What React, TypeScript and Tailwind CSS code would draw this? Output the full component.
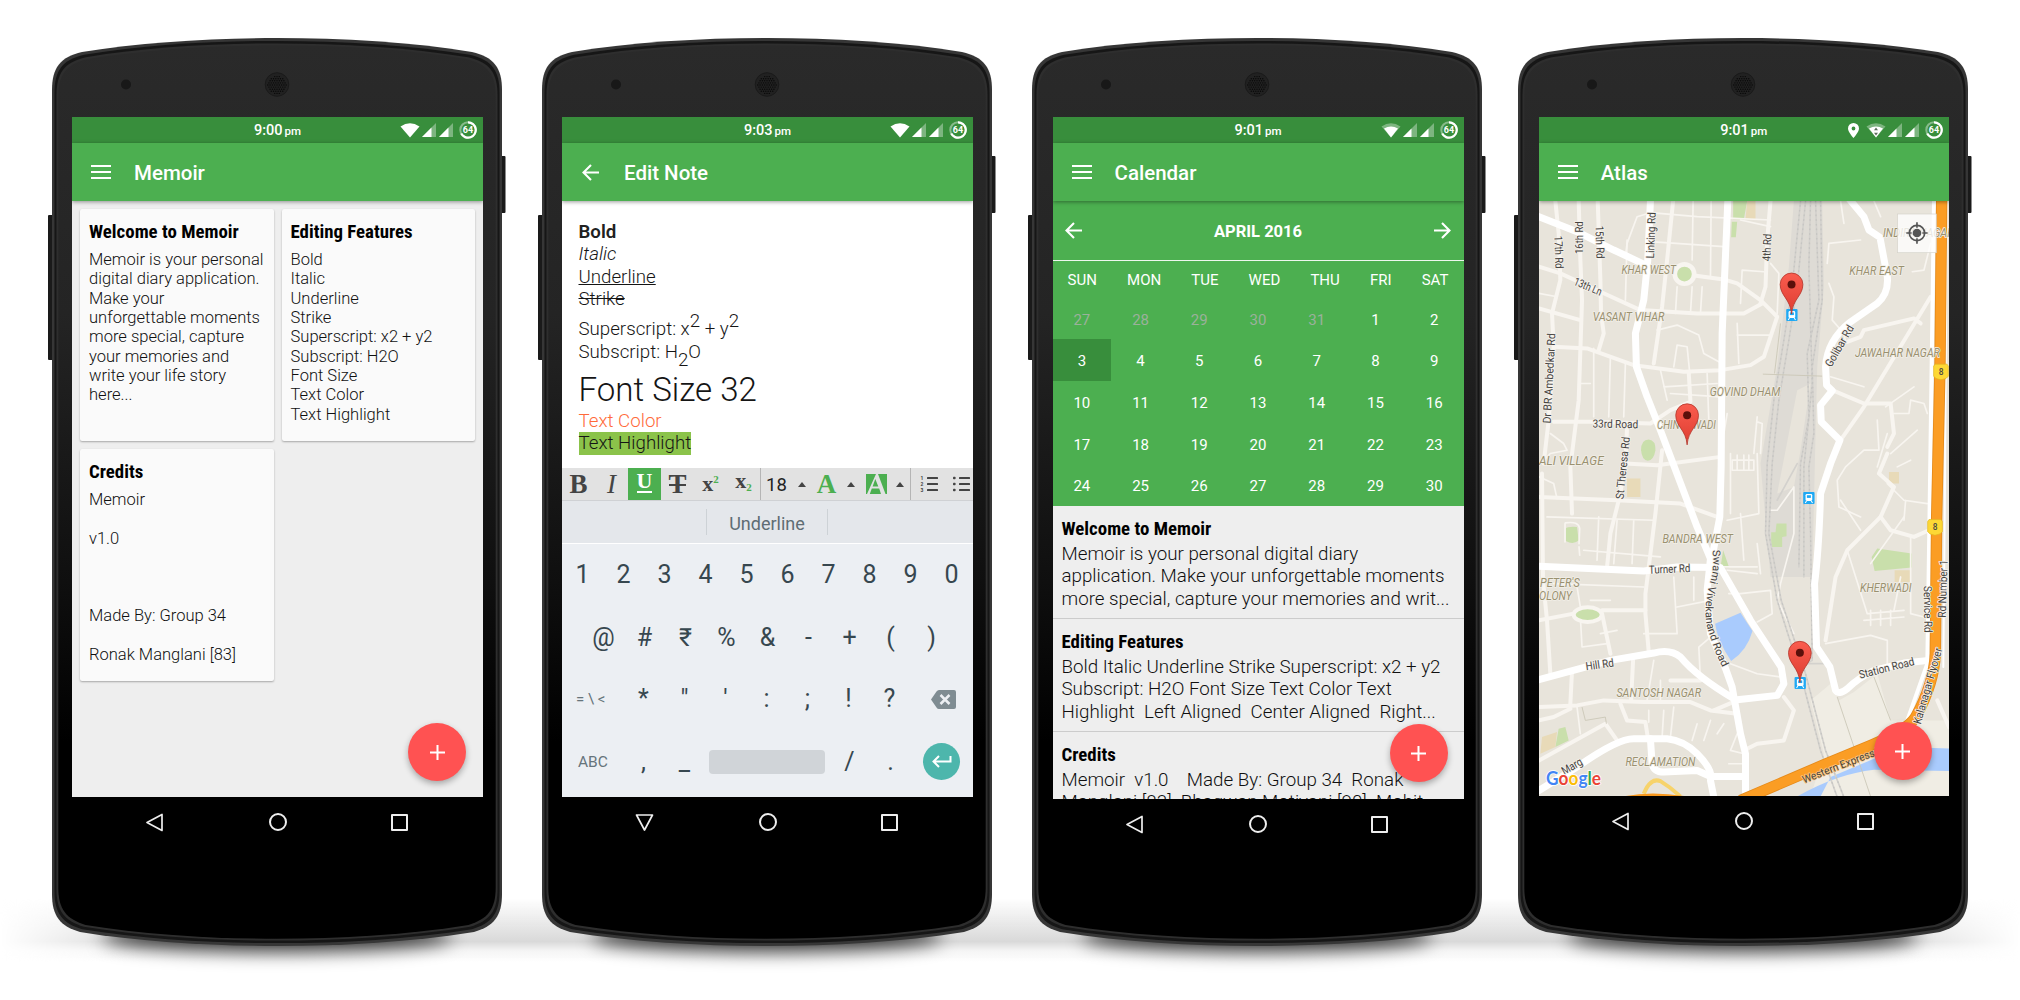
import React from "react";

const FRAME =
  "M0 52 C0 30 8 19 30 14 C90 4 160 0 225 0 C290 0 360 4 420 14 C442 19 450 30 450 52 V856 C450 878 442 888 422 894 C360 904 290 908 225 908 C160 908 90 904 28 894 C8 888 0 878 0 856 Z";

function PhoneBody({ id }: { id: string }) {
  const holes: React.ReactNode[] = [];
  for (let r = -4; r <= 4; r++) {
    for (let c = -4; c <= 4; c++) {
      const x = c * 2.3 + (r % 2 ? 1.15 : 0);
      const y = r * 2.1;
      if (x * x + y * y < 90) holes.push(<circle key={`${r}.${c}`} cx={225 + x} cy={47 + y} r="0.7" fill="#080808" />);
    }
  }
  return (
    <svg className="absolute -left-1 top-0" width="458" height="908" viewBox="-4 0 458 908">
      <defs>
        <linearGradient id={`${id}-face`} x1="0" y1="0" x2="0" y2="1">
          <stop offset="0" stopColor="#2a2a2a" />
          <stop offset="0.3" stopColor="#242424" />
          <stop offset="0.6" stopColor="#0f0f0f" />
          <stop offset="0.78" stopColor="#000" />
          <stop offset="1" stopColor="#000" />
        </linearGradient>
      </defs>
      <rect x="-4" y="177" width="6" height="145" rx="1" fill="#1a1a1a" />
      <rect x="448" y="118" width="5.5" height="57" rx="1" fill="#1a1a1a" />
      <path d={FRAME} fill="#363636" />
      <path d={FRAME} fill="#161616" transform="translate(225 454) scale(0.989 0.9935) translate(-225 -454)" />
      <path d={FRAME} fill="#2e2e2e" transform="translate(225 454) scale(0.98 0.988) translate(-225 -454)" />
      <path d={FRAME} fill={`url(#${id}-face)`} transform="translate(225 454) scale(0.972 0.984) translate(-225 -454)" />
      <circle cx="74" cy="46.500" r="5" fill="#181818" />
      <circle cx="225" cy="46.500" r="11.800" fill="#212121" stroke="#1a1a1a" strokeWidth="1" />
      {holes}
    </svg>
  );
}

function Wifi({ level }: { level: "full" | "low" | "data" }) {
  return (
    <svg width="20" height="15" viewBox="0 0 20 15">
      <path d="M0.500 3.500 Q10 -3 19.500 3.500 L10 14.500 Z" fill="#fff" opacity={level === "full" ? 1 : 0.35} />
      {level !== "full" && <path d="M3 5.500 Q10 1.500 17 5.500 L10 14.500 Z" fill="#fff" />}
      {level === "data" && <path d="M10 4.500 L12 7.300 H8 Z M10 12.500 L12 9.700 H8 Z" fill="#5a6b5a" />}
    </svg>
  );
}

function Signal({ low }: { low?: boolean }) {
  return (
    <svg width="14" height="14" viewBox="0 0 14 14">
      <path d="M14 0 V14 H0 Z" fill="#fff" opacity="0.35" />
      {low ? <path d="M8.500 5.500 V14 H0 Z" fill="#fff" /> : <path d="M9.500 4.500 V14 H0 Z" fill="#fff" />}
    </svg>
  );
}

function Battery() {
  return (
    <svg width="18" height="18" viewBox="0 0 18 18">
      <circle cx="9" cy="9" r="7.700" fill="none" stroke="#fff" strokeOpacity="0.4" strokeWidth="2" />
      <path d="M9 1.300 A7.700 7.700 0 1 1 2.200 12.500" fill="none" stroke="#fff" strokeWidth="2.200" />
      <text x="9" y="12.200" textAnchor="middle" fontSize="9" fontWeight="700" fontFamily="Roboto, sans-serif" fill="#fff">
        64
      </text>
    </svg>
  );
}

function StatusBar({ time, wifi, pin, signals }: { time: string; wifi: "full" | "low" | "data"; pin?: boolean; signals: [boolean, boolean] }) {
  return (
    <div className="relative flex h-[26px] shrink-0 items-center justify-center bg-[#388e3c] text-white">
      <div className="flex items-baseline gap-[2px] pt-[3px] leading-none">
        <span className="text-[14.500px] font-medium">{time}</span>
        <span className="text-[11.500px] font-medium">pm</span>
      </div>
      <div className="absolute right-[6px] top-[4px] flex items-center">
        {pin && (
          <svg className="mr-[7px]" width="11" height="15" viewBox="0 0 11 15">
            <path d="M5.500 0 A5.500 5.500 0 0 1 11 5.500 C11 9 5.500 15 5.500 15 C5.500 15 0 9 0 5.500 A5.500 5.500 0 0 1 5.500 0 Z M5.500 3.600 A1.900 1.900 0 1 0 5.500 7.400 A1.900 1.900 0 1 0 5.500 3.600" fill="#fff" />
          </svg>
        )}
        <Wifi level={wifi} />
        <span className="ml-[2px]"><Signal low={signals[0]} /></span>
        <span className="ml-[3px]"><Signal low={signals[1]} /></span>
        <span className="ml-[6px]"><Battery /></span>
      </div>
    </div>
  );
}

function Arrow({ flip }: { flip?: boolean }) {
  return (
    <svg width="17" height="17" viewBox="0 0 17 17" className={flip ? "rotate-180" : ""}>
      <path d="M9 1 L1.500 8.500 L9 16 M1.500 8.500 H17" fill="none" stroke="#fff" strokeWidth="2.100" />
    </svg>
  );
}

function AppBar({ title, back }: { title: string; back?: boolean }) {
  return (
    <div className="relative z-10 flex h-[58px] shrink-0 items-center bg-[#4caf50] shadow-[0_1px_4px_rgba(0,0,0,0.4)]">
      <div className="flex w-[62px] pl-[19px]">
        {back ? (
          <span className="pl-px"><Arrow /></span>
        ) : (
          <div className="flex w-5 flex-col gap-[4px]">
            <div className="h-[2px] bg-white" />
            <div className="h-[2px] bg-white" />
            <div className="h-[2px] bg-white" />
          </div>
        )}
      </div>
      <div className="pt-[2px] text-[20.500px] font-medium leading-6 text-white">{title}</div>
    </div>
  );
}

function NavBar({ down }: { down?: boolean }) {
  return (
    <div className="flex h-[50px] w-[411px] items-center justify-between pl-[73px] pr-[75px]">
      <svg width="19" height="19" viewBox="0 0 19 19" className={down ? "-rotate-90" : ""}>
        <path d="M17 1.500 V17.500 L2 9.500 Z" fill="none" stroke="#eee" strokeWidth="1.700" strokeLinejoin="round" />
      </svg>
      <div className="size-[18px] rounded-full border-2 border-[#eee]" />
      <div className="size-[17px] rounded-[1px] border-2 border-[#eee]" />
    </div>
  );
}

function Fab({ className }: { className: string }) {
  return (
    <div className={"absolute z-20 flex size-[58px] items-center justify-center rounded-full bg-[#ff5252] shadow-[0_3px_6px_rgba(0,0,0,0.3)] " + className}>
      <svg width="15" height="15" viewBox="0 0 15 15">
        <path d="M7.500 0 V15 M0 7.500 H15" stroke="#fff" strokeWidth="2" />
      </svg>
    </div>
  );
}

type PhoneProps = {
  id: string;
  className?: string;
  screen: string;
  down?: boolean;
  children: React.ReactNode;
};

function Phone({ id, className = "", screen, down, children }: PhoneProps) {
  return (
    <div className={"relative h-[908px] w-[450px] shrink-0 " + className}>
      <PhoneBody id={id} />
      <div className="relative flex flex-col pt-[79px]">
        <div className={"relative flex flex-col overflow-hidden " + screen}>{children}</div>
        <div className="ml-5">
          <NavBar down={down} />
        </div>
      </div>
    </div>
  );
}

function NoteTitle({ children }: { children: React.ReactNode }) {
  return <div className="text-[18.850px] font-bold leading-[22px] text-black [font-stretch:75%]">{children}</div>;
}

function NoteCard({ title, lines }: { title: string; lines: string[] }) {
  return (
    <div className="h-[232px] rounded-[2px] bg-[#fafafa] px-[9px] pt-[12px] shadow-[0_1px_2px_rgba(0,0,0,0.3)]">
      <NoteTitle>{title}</NoteTitle>
      <div className="mt-[7px] text-[16.550px] font-light leading-[19.330px] text-[#101010]">
        {lines.map((l, i) => (
          <div key={i} className="h-[19.330px] whitespace-nowrap">{l}</div>
        ))}
      </div>
    </div>
  );
}

function Notes() {
  return (
    <Phone id="notes" screen="ml-5 h-[680px] w-[411px] bg-[#eeeeee]">
      <StatusBar time="9:00" wifi="full" signals={[false, false]} />
      <AppBar title="Memoir" />
      <div className="grid grid-cols-2 gap-2 p-2">
        <NoteCard
          title="Welcome to Memoir"
          lines={["Memoir is your personal", "digital diary application.", "Make your", "unforgettable moments", "more special, capture", "your memories and", "write your life story", "here..."]}
        />
        <NoteCard
          title="Editing Features"
          lines={["Bold", "Italic", "Underline", "Strike", "Superscript: x2 + y2", "Subscript: H2O", "Font Size", "Text Color", "Text Highlight"]}
        />
        <NoteCard title="Credits" lines={["Memoir", "", "v1.0", "", "", "", "Made By: Group 34", "", "Ronak Manglani [83]"]} />
      </div>
      <Fab className="left-[336px] top-[606px]" />
    </Phone>
  );
}

function Caret() {
  return (
    <div className="flex w-4 justify-center">
      <div className="h-0 w-0 border-x-[4px] border-b-[5px] border-x-transparent border-b-[#444]" />
    </div>
  );
}

function ListIcon({ numbered }: { numbered?: boolean }) {
  return (
    <svg width="18" height="18" viewBox="0 0 18 18" className="shrink-0">
      {[3, 9, 15].map((y, i) => (
        <g key={y}>
          {numbered ? (
            <text x="0.500" y={y + 2} fontSize="5" fontWeight="700" fontFamily="Roboto, sans-serif" fill="#444">{i + 1}</text>
          ) : (
            <rect x="1" y={y - 1.300} width="2.600" height="2.600" rx="0.800" fill="#444" />
          )}
          <rect x="7" y={y - 1} width="11" height="2" rx="0.500" fill="#444" />
        </g>
      ))}
    </svg>
  );
}

function FormatBar() {
  const cell = "flex h-full w-[33px] shrink-0 items-center justify-center";
  return (
    <div className="flex h-[33px] shrink-0 items-center overflow-hidden border-b border-[#cfd1d4] bg-[#e2e2e2] font-['Liberation_Serif',serif] text-[27px] leading-none text-[#444]">
      <div className={cell + " font-bold"}>B</div>
      <div className={cell + " italic"}>I</div>
      <div className={cell + " bg-[#4caf50] pb-1 text-[22px] font-bold text-white"}>
        <span className="border-b-2 border-white leading-[20px]">U</span>
      </div>
      <div className={cell + " relative font-bold"}>
        T
        <div className="absolute left-[8px] top-[16px] h-[2px] w-[17px] bg-[#444]" />
      </div>
      <div className={cell + " pb-px text-[22px] font-bold"}>
        x<span className="-mt-[9px] text-[11px] text-[#4caf50]">2</span>
      </div>
      <div className={cell + " pb-[6px] text-[22px] font-bold"}>
        x<span className="mt-[12px] text-[11px] text-[#4caf50]">2</span>
      </div>
      <div className="flex h-full w-[34px] items-center justify-center border-l border-[#b5b5b5] pr-[2px] pt-[2px] font-['Roboto',sans-serif] text-[18.500px] text-[#222]">
        18
      </div>
      <Caret />
      <div className={cell + " font-bold text-[#4caf50]"}>A</div>
      <Caret />
      <div className={cell + " pl-px"}>
        <svg width="21" height="20" viewBox="0 0 21 20">
          <rect width="21" height="20" fill="#4caf50" />
          <path d="M1 20 L10 0 H12 L19.500 20 H15 L13.200 14.500 H5.800 L3.800 20 Z M6.600 12.500 H12.300 L9.300 5 Z" fill="#e2e2e2" fillRule="evenodd" />
        </svg>
      </div>
      <Caret />
      <div className="ml-[2px] flex h-full shrink-0 items-center gap-[14px] border-l border-[#b5b5b5] pl-[9px]">
        <ListIcon numbered />
        <ListIcon />
      </div>
    </div>
  );
}

function Key({ children }: { children: React.ReactNode }) {
  return <div className="flex w-[41px] shrink-0 justify-center">{children}</div>;
}

function Keyboard() {
  return (
    <div className="flex flex-1 flex-col bg-[#eceff3] text-[25px] leading-[30px] text-[#37474f]">
      <div className="flex h-[61px] items-center pt-px">
        {"1234567890".split("").map((k) => <Key key={k}>{k}</Key>)}
      </div>
      <div className="flex h-[63px] items-center pl-[21px] pt-[2px]">
        {["@", "#", "₹", "%", "&", "-", "+", "(", ")"].map((k) => <Key key={k}>{k}</Key>)}
      </div>
      <div className="flex h-[62px] items-center">
        <div className="w-[61px] pl-[14px] text-[15px] text-[#66747b]">= \ &lt;</div>
        {["*", '"', "'", ":", ";", "!", "?"].map((k) => <Key key={k}>{k}</Key>)}
        <svg className="ml-[21px]" width="25" height="19" viewBox="0 0 25 19">
          <path d="M8 0 H23 Q25 0 25 2 V17 Q25 19 23 19 H8 Q6.500 19 5.500 17.500 L0 9.500 L5.500 1.500 Q6.500 0 8 0 Z" fill="#7f8c92" />
          <path d="M9.500 5 L18.500 14 M18.500 5 L9.500 14" stroke="#eceff3" strokeWidth="2.500" />
        </svg>
      </div>
      <div className="flex h-[63px] items-center">
        <div className="w-[61px] pl-[16px] text-[15.500px] text-[#66747b]">ABC</div>
        <Key>,</Key>
        <Key>_</Key>
        <div className="ml-[4px] h-6 w-[116px] rounded-[4px] bg-[#d0d4d8]" />
        <div className="ml-[4px] flex"><Key>/</Key></div>
        <Key>.</Key>
        <div className="ml-[12px] flex size-[37px] items-center justify-center rounded-full bg-[#4db6ac]">
          <svg width="20" height="13" viewBox="0 0 20 13">
            <path d="M7 1 L1.500 6.500 L7 12 M1.500 6.500 H18.500 V1" fill="none" stroke="#fff" strokeWidth="2" />
          </svg>
        </div>
      </div>
    </div>
  );
}

function Editor() {
  const line = "h-[22.330px] leading-[22.330px]";
  return (
    <Phone id="editor" className="ml-10" screen="ml-5 h-[680px] w-[411px] bg-white" down>
      <StatusBar time="9:03" wifi="full" signals={[false, false]} />
      <AppBar title="Edit Note" back />
      <div className="h-[267px] shrink-0 pl-[16.500px] pt-[20px] text-[18.700px] font-light text-[#151515]">
        <div className={line + " font-semibold text-[#212121]"}>Bold</div>
        <div className={line + " italic"}>Italic</div>
        <div className={line}><span className="underline">Underline</span></div>
        <div className={line}><span className="line-through">Strike</span></div>
        <div className={line + " mt-[8px]"}>
          Superscript: x<span className="relative -top-[8px]">2</span> + y<span className="relative -top-[8px]">2</span>
        </div>
        <div className={line}>
          Subscript: H<span className="relative top-[8px]">2</span>O
        </div>
        <div className="mt-[7px] h-[40px] text-[33.100px] leading-[40px]">Font Size 32</div>
        <div className={line + " font-[340] text-[#ff6a3a]"}>Text Color</div>
        <div className={line}><span className="inline-block bg-[#8bc34a]">Text Highlight</span></div>
      </div>
      <FormatBar />
      <div className="flex h-[43px] shrink-0 items-center border-b border-white bg-[#e4e7eb]">
        <div className="w-[144px]" />
        <div className="flex h-[26px] w-[122px] items-center justify-center border-x border-[#cdd2d6] pt-[2px] text-[18px] text-[#5f6d74]">Underline</div>
      </div>
      <Keyboard />
    </Phone>
  );
}

function Entry({ title, lines }: { title: string; lines: string[] }) {
  return (
    <div className="h-[113px] shrink-0 border-b border-[#cccccc] px-[9px] pt-[12px]">
      <NoteTitle>{title}</NoteTitle>
      <div className="mt-[3px] whitespace-pre text-[18.750px] font-light leading-[22.330px] text-[#101010]">
        {lines.map((l) => <div key={l}>{l}</div>)}
      </div>
    </div>
  );
}

function CalendarScreen() {
  const days = [27, 28, 29, 30, 31, ...Array.from({ length: 30 }, (_, i) => i + 1)];
  return (
    <Phone id="calendar" className="ml-10" screen="ml-[20.500px] h-[682px] w-[411px] bg-[#eeeeee]">
      <StatusBar time="9:01" wifi="low" signals={[true, true]} />
      <AppBar title="Calendar" />
      <div className="shrink-0 bg-[#4caf50] text-white">
        <div className="flex h-[59.500px] items-center justify-between border-b border-white/90 px-[12px]">
          <Arrow />
          <div className="pt-[4px] text-[16.500px] font-bold">APRIL 2016</div>
          <Arrow flip />
        </div>
        <div className="flex h-[37px] items-center justify-around pt-[2px] text-[15px]">
          {["SUN", "MON", "TUE", "WED", "THU", "FRI", "SAT"].map((d) => <div key={d}>{d}</div>)}
        </div>
        <div className="grid grid-cols-7">
          {days.map((d, i) => (
            <div
              key={i}
              className={
                "flex h-[41.700px] items-center justify-center pt-[3px] text-[15px] " +
                (i < 5 ? "text-[#9bb19b]" : i === 7 ? "bg-[#388e3c]" : "")
              }
            >
              {d}
            </div>
          ))}
        </div>
      </div>
      <Entry title="Welcome to Memoir" lines={["Memoir is your personal digital diary", "application. Make your unforgettable moments", "more special, capture your memories and writ..."]} />
      <Entry title="Editing Features" lines={["Bold Italic Underline Strike Superscript: x2 + y2", "Subscript: H2O Font Size Text Color Text", "Highlight  Left Aligned  Center Aligned  Right..."]} />
      <Entry title="Credits" lines={["Memoir  v1.0    Made By: Group 34  Ronak", "Manglani [83]  Bhagwan Motiyani [90]  Mohit"]} />
      <Fab className="left-[337px] top-[607px]" />
    </Phone>
  );
}

const MINOR = [
  "M135 303 L145 400 L150 540 L125 640 L130 740 L115 960 L100 1090",
  "M205 303 L210 480 L215 600 L205 900 L180 1100 L185 1240",
  "M262 303 L270 540 L272 640 L280 700 L265 750",
  "M488 303 L470 480 L455 620 L430 790",
  "M780 303 L770 420 L765 560 L750 610",
  "M86 500 L150 520 L270 575 L390 630 L560 640 L700 640 L755 610",
  "M86 625 L210 660",
  "M130 740 L230 745 L370 795 L520 815 L630 810 L720 795 L760 770 L800 650 L750 600 L680 550 L640 538 L540 525",
  "M130 965 L240 965 L420 970 L480 930 L540 905 L535 820",
  "M86 1190 L320 1200 L510 1210 L620 1250",
  "M455 1050 L435 1240 L405 1480 L405 1540 L415 1655",
  "M350 980 L345 1100 L325 1200 L300 1300 L290 1400",
  "M345 1090 L440 1095 L630 1070",
  "M95 1120 L98 1440 L110 1560 L120 1720",
  "M86 1560 L190 1540 M275 1530 L405 1530 M275 1540 L300 1660",
  "M86 1820 L200 1815 L280 1800 L400 1805 L540 1805 L600 1830 L680 1840",
  "M185 1710 L180 1810 M368 1680 L362 1800",
  "M86 1860 L130 1850 L180 1825 M86 1980 L285 1870 L320 1920",
  "M330 1810 L350 1860 L405 1865 L412 1910",
  "M680 1800 L610 1830 M820 1790 L850 1830 L820 1920 L740 1930 L710 1945",
  "M965 870 L1060 910 L1140 910 L1150 1000 L1130 1040",
  "M1260 590 L1060 920 L990 1020",
  "M1010 725 L1050 710 L1060 690 L1210 655 L1230 670",
  "M1130 1060 L1105 1120 L1150 1160 L1110 1250 L1010 1350 L975 1430 L945 1620",
  "M1110 1250 L1140 1290 L1210 1310 L1255 1290",
  "M1280 1800 L1315 1880",
  "M640 2030 L700 2030 M570 1740 L480 1740",
];

const TINY = [
  "M345 470 L350 430 L380 350 L420 338 L560 350 L780 360",
  "M548 303 L545 480 M602 303 L600 530 M86 580 L140 590 M690 360 L780 380",
  "M420 425 L640 440 M350 420 L345 600 M575 560 L570 640 M500 560 L495 640",
  "M545 560 L540 640 M440 690 L500 675 L565 705 L580 760 L625 785",
  "M680 670 L685 790 M680 705 L780 705 M500 735 L490 800 M500 735 L530 740 L538 820",
  "M250 745 L250 950 M300 770 L295 950 M345 790 L340 950 M210 850 L240 850",
  "M450 810 L470 900 M460 860 L620 850 M480 880 L630 890 M590 820 L595 960",
  "M695 510 L690 610 M695 510 L760 515 M780 490 L805 520 L800 640 M955 430 L1050 420 M955 430 L950 490",
  "M955 550 L970 590 L965 660 L1000 700 L1005 725 M740 950 L730 1060 M740 965 L755 970 L750 1060 M650 940 L640 1000",
  "M990 303 L1000 370 M1090 303 L1110 350 M1260 430 L1240 510 L1205 515",
  "M960 830 L1060 860 M1125 920 L1210 860 M1100 960 L1105 1050 L1060 1050 L1005 1100 L980 1140 L985 1220 L1050 1250",
  "M1150 940 L1195 940 L1200 900 L1240 910 L1250 940 M1220 990 L1140 1060 M1130 1000 L1100 1100",
  "M120 1000 L160 1030 L170 1050 L120 1060 L90 1090 M86 1130 L130 1150 L140 1195",
  "M110 1250 L430 1260 M265 1250 L260 1380 M320 1260 L310 1390 M370 1260 L365 1390 M220 1350 L450 1370",
  "M165 1268 Q205 1262 208 1285 L206 1330 M164 1270 V1325 M206 1340 L208 1365",
  "M130 1450 L400 1460 M200 1460 L210 1520 M490 1430 L500 1600 M550 1430 L550 1500 M400 1600 L500 1600 M500 1520 L600 1500",
  "M660 1060 L660 1240 M740 1060 L745 1240 L650 1260 M690 1240 L700 1380 M740 1330 L750 1420 M650 1410 L740 1420",
  "M655 1480 L690 1480 L780 1470 L785 1540 L740 1565 M640 1400 L740 1400",
  "M665 1080 H730 V1110 H665 Z M680 1065 V1110 M700 1065 V1110 M715 1065 V1110",
  "M210 1550 L215 1640 L290 1630 M270 1600 L320 1590 M240 1500 L300 1500",
  "M430 1680 L410 1800 M450 1740 L450 1800 M570 1740 L565 1640 L600 1610 M660 1690 L740 1720 L810 1730",
  "M200 1820 L210 1900 M490 1820 L480 1910 M560 1870 L545 1920 M600 1860 L580 1920 M640 1870 L620 1900",
  "M680 1900 L660 1950 L700 1960 M655 1990 H700 M460 1830 L455 1910 M415 1830 V1865",
  "M780 1230 L800 1230 L850 1160 L850 1300 L810 1450 L800 1500 L850 1600",
  "M990 1200 L1050 1290 M1010 1350 L1070 1540 L1180 1530 M1060 1560 L1180 1550 M1080 1530 V1575 M1110 1530 V1575 M1140 1530 V1575",
  "M1200 1310 L1200 1540 L1240 1550 M945 1630 L1080 1605 L1130 1620 L1130 1690 M1170 1430 L1150 1530 M1080 1390 L1180 1250",
  "M1130 1150 L1180 1200 L1250 1210 M1160 1100 L1200 1080 M1185 1200 L1180 1260",
];

const MAJOR = [
  "M420 303 L412 480 L400 600 L375 700 L378 800 L410 890 L450 990 L560 1280 L600 1375 L590 1470 L600 1600 L640 1690 L665 1760 L690 1900 L705 1960 L705 2090",
  "M652 303 L635 700 L632 1100 L628 1250 L605 1370",
  "M86 350 L200 395 L310 450 L400 492",
  "M86 1398 L400 1412 L500 1400 L630 1402 L720 1560 L812 1700 L820 1750 L800 1785 L680 1798",
  "M86 1738 L300 1680 L430 1658 Q480 1645 510 1670 Q560 1730 670 1795",
  "M86 2070 L200 2000 Q320 1915 370 1915 H470 Q520 1920 560 1960 Q610 2010 600 2040 L610 2090",
  "M420 1915 L425 1990 Q430 2015 460 2015 L560 2010 L600 2028 H700",
  "M1010 290 L1060 350 L1075 390 L1108 412 L1130 530 Q1135 580 1100 610 L1020 665 Q950 720 945 800 L948 855 L965 872 L930 915 L932 965 L988 1020 L960 1090 L930 1180 Q925 1350 912 1450 L918 1640 L958 1700 L975 1770 Q985 1785 1010 1765 Q1040 1735 1090 1710 L1180 1688 L1255 1680",
];

const RAIL = [
  "M870 303 L845 560 L820 720 L790 900 L770 1090 L765 1300 L800 1500 L870 1720 L930 1950 L980 2090",
  "M885 303 L860 560 L835 720 L805 900 L785 1090 L775 1300 L812 1500 L885 1720 L945 1950 L1000 2090",
  "M915 303 L925 600 L890 760 L895 950 L870 1090 L865 1400",
  "M900 303 L895 500 L905 850 L880 1100 L880 1430",
  "M930 303 L935 600 L905 800 L910 1000 L895 1100 L900 1300 L905 1680",
  "M860 1090 L800 1200 M905 1680 L870 1700 M875 1690 L960 1690",
];

function Pin({ x, y }: { x: number; y: number }) {
  return (
    <g transform={`translate(${x} ${y})`}>
      <path d="M0 0 C-3 -45 -34 -55 -34 -89 A34 34 0 0 1 34 -89 C34 -55 3 -45 0 0 Z" fill="url(#pinred)" stroke="#b5372c" strokeWidth="2.500" />
      <circle cy="-89" r="12" fill="#5b100b" />
    </g>
  );
}

function Station({ x, y }: { x: number; y: number }) {
  return (
    <g transform={`translate(${x} ${y})`}>
      <rect x="-17" y="-18" width="34" height="36" rx="3" fill="#1fa9f4" />
      <rect x="-10" y="-12" width="20" height="21" rx="4" fill="#fff" />
      <rect x="-6" y="-8" width="12" height="8" fill="#1fa9f4" />
      <path d="M-7 9 L-11 15 M7 9 L11 15" stroke="#fff" strokeWidth="3" />
    </g>
  );
}

function Shield({ x, y }: { x: number; y: number }) {
  return (
    <g transform={`translate(${x} ${y})`}>
      <path d="M-18 -23 H18 L22 -17 V13 L15 20 L0 24 L-15 20 L-22 13 V-17 Z" fill="#fdd835" stroke="#e0b520" strokeWidth="2" />
      <text y="9" textAnchor="middle" fontSize="25" fontWeight="500" fill="#444">8</text>
    </g>
  );
}

const AREAS: [string, number, number, number][] = [
  ["KHAR WEST", 333, 523, 163],
  ["VASANT VIHAR", 247, 662, 215],
  ["KHAR EAST", 1016, 525, 164],
  ["JAWAHAR NAGAR", 1033, 771, 255],
  ["GOVIND DHAM", 598, 889, 211],
  ["CHINCHWADI", 440, 986, 176],
  ["ALI VILLAGE", 86, 1093, 194],
  ["BANDRA WEST", 456, 1329, 211],
  ["KHERWADI", 1048, 1476, 155],
  ["SANTOSH NAGAR", 318, 1791, 254],
  ["RECLAMATION", 345, 1998, 210],
  ["PETER'S", 89, 1460, 119],
  ["OLONY", 86, 1499, 99],
  ["INDIRA NAGAR", 1117, 410, 212],
];

const STREETS: [string, number, number, number, number][] = [
  ["17th Rd", 132, 408, 88, 98],
  ["16th Rd", 218, 462, -90, 98],
  ["15th Rd", 255, 378, 88, 98],
  ["Linking Rd", 431, 475, -88, 138],
  ["4th Rd", 779, 484, -87, 82],
  ["13th Ln", 188, 553, 23, 88],
  ["Dr BR Ambedkar Rd", 121, 970, -87, 270],
  ["33rd Road", 246, 982, 1, 137],
  ["St Theresa Rd", 339, 1198, -84, 188],
  ["Golibar Rd", 962, 803, -60, 138],
  ["Turner Rd", 416, 1420, -2, 124],
  ["Hill Rd", 228, 1710, -8, 84],
  ["Station Road", 1048, 1735, -14, 170],
  ["Service Rd", 1239, 1457, 89, 140],
  ["Rd Number 1", 1305, 1552, -88, 173],
  ["Marg", 162, 2024, -30, 66],
  ["Kalanagar Flyover", 1230, 1873, -74, 236],
];

function CityMap() {
  const stroke = { fill: "none", strokeLinecap: "round" as const, strokeLinejoin: "round" as const };
  return (
    <svg className="block w-full shrink-0 grow" viewBox="86 303 1229 1785" preserveAspectRatio="none" fontFamily="Roboto, sans-serif">
      <defs>
        <linearGradient id="pinred" x1="0" y1="0" x2="0" y2="1">
          <stop offset="0" stopColor="#fa5c4e" />
          <stop offset="1" stopColor="#dd3d31" />
        </linearGradient>
        <path id="swami" d="M606 1350 Q612 1400 600 1440 Q573 1540 596 1600 Q610 1650 638 1705" />
        <path id="western" d="M880 2049 L1092 1967 L1250 1895" />
      </defs>
      <rect x="86" y="303" width="1229" height="1785" fill="#e8e4db" />
      <path d="M960 1750 L985 1800 L1030 1775 L1100 1720 L1140 1860 L1315 1860 V2088 H900 L940 1960 L900 1800 Z" fill="#f0ede4" />
      <path d="M850 303 H935 L940 560 L920 800 L915 1000 L905 1430 H860 L780 1430 L750 1090 L800 800 L835 500 Z" fill="#dedbd5" />
      <path d="M900 850 L860 870 L800 1180 L850 1160 L870 1050 Z" fill="#e8e4db" />
      <g fill="#c9dfab">
        <path d="M668 303 H710 L700 358 H668 Z M664 365 H680 L676 412 H662 Z" />
        <path d="M392 1050 Q392 1018 415 1018 Q436 1020 435 1050 Q430 1080 412 1082 Q394 1078 392 1050" />
        <path d="M166 1285 Q170 1278 200 1280 L205 1320 Q190 1335 166 1322 Z" />
        <path d="M798 1270 H828 V1308 L815 1310 V1340 H782 V1296 H795 Z" />
        <path d="M1100 1345 L1203 1360 V1402 L1092 1412 L1083 1370 Z M638 1350 L656 1402 H630 Z M145 1885 L165 1880 L175 1920 L135 1940 Z" />
      </g>
      <path d="M350 1135 H390 V1190 H350 Z M1135 1115 H1165 V1150 H1135 Z M1152 1410 H1200 V1445 H1152 Z M710 303 H735 V358 H705 Z M95 1910 L140 1895 L135 1940 L90 1960 Z" fill="#e8dab8" />
      <path d="M614 1570 L690 1537 L726 1592 Q710 1650 662 1682 Q620 1620 614 1570 Z" fill="#a9cbfd" />
      <path d="M860 2088 Q980 2020 1090 2008 L1315 2012 V1944 L1180 1940 L1090 1975 L960 2030 L930 2088 Z" fill="#a9cbfd" />

      <g {...stroke} stroke="#f8f5f0">
        {TINY.map((d) => <path key={d} d={d} strokeWidth="5" />)}
        {MINOR.map((d) => <path key={d} d={d} strokeWidth="12" />)}
      </g>
      <circle cx="522" cy="522" r="29" fill="#c9dfab" stroke="#f8f5f0" strokeWidth="14" />
      <ellipse cx="232" cy="1543" rx="42" ry="22" fill="#c9dfab" stroke="#f8f5f0" strokeWidth="12" />
      <g {...stroke} stroke="#d3d1cd" strokeWidth="5">
        {RAIL.map((d) => <path key={d} d={d} />)}
      </g>
      <g {...stroke} stroke="#c6c5c2" strokeWidth="4" strokeDasharray="2 12">
        {RAIL.slice(0, 5).map((d) => <path key={d} d={d} />)}
      </g>
      <path d="M757 822 L935 828 M810 670 L792 820 M980 1790 L1080 2088 M215 1820 L225 1860 L285 1850 L288 1870 M1090 1730 L1140 1860" fill="none" stroke="#c9c5b4" strokeWidth="2.500" />
      <g {...stroke} stroke="#ffffff">
        {MAJOR.map((d) => <path key={d} d={d} strokeWidth="21" />)}
        <path d="M1270 303 L1258 1150 L1250 1690 L1190 1860" strokeWidth="12" />
        <path d="M1308 303 L1303 1150 L1298 1700" strokeWidth="6" />
      </g>
      <path d="M400 2080 Q420 2030 450 2042 Q480 2060 510 2088" fill="none" stroke="#f7d36b" strokeWidth="12" />
      <path d="M340 2088 Q420 2070 530 2088 Z" fill="#f7971d" />
      <path d="M1293 303 L1288 800 L1278 1250 L1274 1660 Q1270 1750 1215 1850 Q1190 1890 1080 1935 L940 1993 L690 2100" fill="none" stroke="#e58a1a" strokeWidth="34" />
      <path d="M1293 303 L1288 800 L1278 1250 L1274 1660 Q1270 1750 1215 1850 Q1190 1890 1080 1935 L940 1993 L690 2100" fill="none" stroke="#fb9d24" strokeWidth="29" />

      <g fontSize="36" fontStyle="italic" fill="#9a9170" stroke="#f2efe8" strokeWidth="5" strokeLinejoin="round" className="[paint-order:stroke]">
        {AREAS.map(([t, x, y, w]) => (
          <text key={t} x={x} y={y} textLength={w} lengthAdjust="spacingAndGlyphs">{t}</text>
        ))}
      </g>
      <g fontSize="34" fill="#45433f" stroke="#f5f2ec" strokeWidth="5" strokeLinejoin="round" className="[paint-order:stroke]">
        {STREETS.map(([t, x, y, a, w]) => (
          <text key={t} transform={`translate(${x} ${y}) rotate(${a})`} textLength={w} lengthAdjust="spacingAndGlyphs">{t}</text>
        ))}
        <text fontSize="32"><textPath href="#swami" textLength="362" lengthAdjust="spacingAndGlyphs">Swami Vivekanand Road</textPath></text>
        <text fontSize="32" stroke="#fbc47a"><textPath href="#western" textLength="298" lengthAdjust="spacingAndGlyphs">Western Express Hwy</textPath></text>
      </g>
      <Shield x={1291} y={815} />
      <Shield x={1273} y={1281} />
      <Station x={844} y={645} />
      <Station x={895} y={1193} />
      <Station x={869} y={1748} />
      <Pin x={843} y={642} />
      <Pin x={530} y={1034} />
      <Pin x={868} y={1746} />

      <rect x="1161" y="342" width="116" height="116" fill="#fff" fillOpacity="0.78" stroke="#d5d2ca" strokeWidth="2" />
      <g fill="none" stroke="#555" strokeWidth="5">
        <circle cx="1219" cy="399" r="23" />
        <path d="M1219 367 V383 M1219 415 V431 M1187 399 H1203 M1235 399 H1251" />
      </g>
      <circle cx="1219" cy="399" r="13" fill="#555" />

      <text x="107" y="2054" fontSize="54" fontWeight="700" fontFamily="Lato, sans-serif" textLength="165" lengthAdjust="spacingAndGlyphs" stroke="#fff" strokeWidth="5" className="[paint-order:stroke]">
        <tspan fill="#4285f4">G</tspan>
        <tspan fill="#ea4335">o</tspan>
        <tspan fill="#fbbc05">o</tspan>
        <tspan fill="#4285f4">g</tspan>
        <tspan fill="#34a853">l</tspan>
        <tspan fill="#ea4335">e</tspan>
      </text>
    </svg>
  );
}

function Atlas() {
  return (
    <Phone id="atlas" className="ml-9" screen="ml-[20.670px] h-[679px] w-[410px] bg-[#e8e4db]">
      <StatusBar time="9:01" wifi="data" pin signals={[true, false]} />
      <AppBar title="Atlas" />
      <CityMap />
      <Fab className="left-[335px] top-[605px]" />
    </Phone>
  );
}

function FloorShadow() {
  return (
    <div className="absolute inset-0">
      <div className="absolute inset-x-0 top-[898px] h-[64px] bg-[linear-gradient(to_bottom,transparent,#e6e6e6_45%,#d9d9d9_68%,#f4f4f4_82%,transparent)] [mask-image:linear-gradient(to_right,transparent,black_7%,black_93%,transparent)]" />
      <div className="absolute left-[102px] top-[922px] h-[30px] w-[350px] rounded-[50%] bg-black/75 blur-[9px]" />
      <div className="absolute left-[592px] top-[922px] h-[30px] w-[350px] rounded-[50%] bg-black/75 blur-[9px]" />
      <div className="absolute left-[1082px] top-[922px] h-[30px] w-[350px] rounded-[50%] bg-black/75 blur-[9px]" />
      <div className="absolute left-[1568px] top-[922px] h-[30px] w-[350px] rounded-[50%] bg-black/75 blur-[9px]" />
    </div>
  );
}

export default function App() {
  return (
    <div className="relative h-[1000px] w-[2020px] overflow-hidden bg-white font-['Roboto',sans-serif]">
      <FloorShadow />
      <div className="relative flex pl-[52px] pt-[38px]">
        <Notes />
        <Editor />
        <CalendarScreen />
        <Atlas />
      </div>
    </div>
  );
}
